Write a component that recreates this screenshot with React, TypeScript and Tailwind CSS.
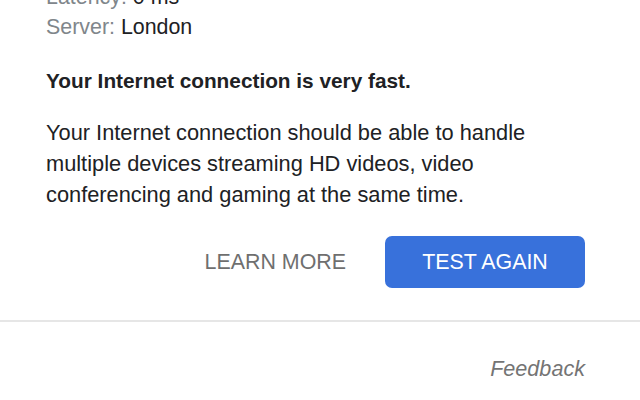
export default function App() {
  return (
    <div className="w-[640px] h-[400px] overflow-hidden bg-white font-['Liberation_Sans',Arial,sans-serif] text-[#202124]">
      <div className="pl-[46px] pr-[55px]">
        <div className="mt-[-18px] text-[21.4px] leading-[30px]">
          <div>
            <span className="text-[#80868b]">Latency: </span>0 ms
          </div>
          <div>
            <span className="text-[#80868b]">Server: </span>London
          </div>
        </div>
        <p className="mt-[24px] text-[20.8px] leading-[30px] font-bold">Your Internet connection is very fast.</p>
        <p className="mt-[21px] max-w-[520px] text-[21.8px] leading-[31px]">
          Your Internet connection should be able to handle multiple devices streaming HD videos, video conferencing and gaming at the same time.
        </p>
        <div className="mt-[26px] flex items-center justify-end gap-[39px]">
          <button className="text-[21.4px] text-[#6f6f6f] uppercase">Learn more</button>
          <button className="w-[200px] h-[52px] rounded-[7px] bg-[#3871db] text-white text-[21.4px] uppercase">Test again</button>
        </div>
      </div>
      <div className="mt-[32px] border-t-2 border-[#e6e6e6]" />
      <div className="pr-[55px] pt-[31px] text-right">
        <span className="italic text-[21.6px] text-[#747474]">Feedback</span>
      </div>
    </div>
  );
}
